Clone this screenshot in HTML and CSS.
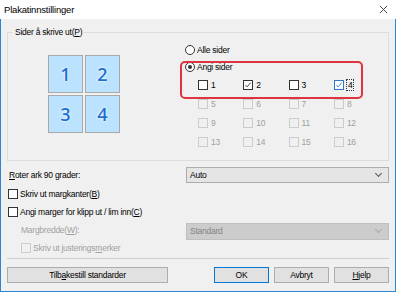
FILE: index.html
```html
<!DOCTYPE html>
<html lang="no">
<head>
    <meta charset="UTF-8">
    <meta name="viewport" content="width=device-width, initial-scale=1.0">
    <title>Plakatinnstillinger</title>
    <link rel="stylesheet" href="styles.css">
</head>
<body>
<div class="window">
    <div class="titlebar">
        <span class="title">Plakatinnstillinger</span>
        <svg class="close" width="10" height="10" viewBox="0 0 10 10">
            <path d="M1 1 L9 9 M9 1 L1 9" stroke="#333" stroke-width="1" fill="none"/>
        </svg>
    </div>

    <div class="dialog">
        <fieldset class="group">
            <legend>Sider å skrive ut(<u>P</u>)</legend>
            <div class="group-body">
                <div class="preview">
                    <div class="tile">1</div>
                    <div class="tile">2</div>
                    <div class="tile">3</div>
                    <div class="tile">4</div>
                </div>

                <div class="pages">
                    <div class="radio-row first"><span class="radio"></span>Alle sider</div>
                    <div class="custom">
                        <div class="radio-row"><span class="radio on"></span>Angi sider</div>
                        <div class="page-grid">
                            <span class="check"><span class="box"></span>1</span>
                            <span class="check"><span class="box"><svg viewBox="0 0 9 9"><path d="M1.5 4.5 L3.5 6.6 L7.6 1.8" stroke="#333" fill="none"/></svg></span>2</span>
                            <span class="check"><span class="box"></span>3</span>
                            <span class="check"><span class="box focus"><svg viewBox="0 0 9 9"><path d="M1.5 4.5 L3.5 6.6 L7.6 1.8" stroke="#2a78d0" fill="none"/></svg></span><span class="focus-text">4</span></span>
                        </div>
                    </div>
                    <div class="page-grid disabled">
                        <span class="check"><span class="box"></span>5</span>
                        <span class="check"><span class="box"></span>6</span>
                        <span class="check"><span class="box"></span>7</span>
                        <span class="check"><span class="box"></span>8</span>
                        <span class="check"><span class="box"></span>9</span>
                        <span class="check"><span class="box"></span>10</span>
                        <span class="check"><span class="box"></span>11</span>
                        <span class="check"><span class="box"></span>12</span>
                        <span class="check"><span class="box"></span>13</span>
                        <span class="check"><span class="box"></span>14</span>
                        <span class="check"><span class="box"></span>15</span>
                        <span class="check"><span class="box"></span>16</span>
                    </div>
                </div>
            </div>
        </fieldset>

        <div class="field-row rotate">
            <span class="field-label"><u>R</u>oter ark 90 grader:</span>
            <div class="combo">Auto<span class="chevron"></span></div>
        </div>

        <div class="option"><span class="box"></span>Skriv ut margkanter(<u>B</u>)</div>
        <div class="option"><span class="box"></span>Angi marger for klipp ut / lim inn(<u>C</u>)</div>

        <div class="field-row margin disabled">
            <span class="field-label">Margbredde(<u>W</u>):</span>
            <div class="combo">Standard<span class="chevron"></span></div>
        </div>

        <div class="option indent disabled"><span class="box"></span>Skriv ut justerings<u>m</u>erker</div>

        <div class="separator"></div>

        <div class="button-group">
            <button class="wide">Tilb<u>a</u>kestill standarder</button>
            <div class="right-buttons">
                <button class="default">OK</button>
                <button>Avbryt</button>
                <button><u>H</u>jelp</button>
            </div>
        </div>
    </div>
</div>
</body>
</html>
```

FILE: styles.css
```css
* {
    box-sizing: border-box;
}
body {
    margin: 0;
    font-family: "Liberation Sans", Arial, sans-serif;
    font-size: 8.5px;
    letter-spacing: -0.25px;
    color: #000;
}
u {
    text-decoration: underline;
    text-underline-offset: 1px;
}
.window {
    width: 396px;
    height: 292px;
    background: #fff;
    display: flex;
    flex-direction: column;
}
.titlebar {
    height: 19px;
    display: flex;
    align-items: center;
    justify-content: space-between;
    padding: 0 8px 0 4px;
    background: #fff;
}
.title {
    font-size: 9.5px;
    letter-spacing: -0.2px;
}
.close {
    width: 9px;
    height: 9px;
}
.dialog {
    flex: 1;
    background: #f0f0f0;
    border: 1px solid #2b87d3;
    border-top: none;
    padding: 7px 6px 7px 6px;
    display: flex;
    flex-direction: column;
}

/* group box */
.group {
    margin: 0;
    padding: 0 0 9px 0;
    border: 1px solid #dcdcdc;
    min-width: 0;
}
.group legend {
    padding: 0 2px;
    margin-left: 5px;
    line-height: 12px;
}
.group-body {
    display: grid;
    grid-template-columns: 172px 1fr;
}
.preview {
    margin: 17px 0 0 40px;
    display: grid;
    grid-template-columns: 35px 35px;
    grid-auto-rows: 38px;
    gap: 2px;
    align-self: start;
}
.tile {
    background: #bbe3ff;
    border: 1px solid #a9a9a9;
    display: flex;
    align-items: center;
    justify-content: center;
    font-family: "Open Sans", "Noto Sans", sans-serif;
    font-weight: 600;
    font-size: 18px;
    letter-spacing: 0;
    color: #1f6fd3;
    text-shadow: 0 0 2px #fff, 0 0 2px #fff;
}
.pages {
    padding: 3px 0 0 5px;
}
.radio-row {
    height: 16px;
    display: flex;
    align-items: center;
}
.radio-row.first {
    height: 18px;
}
.radio {
    width: 10px;
    height: 10px;
    border: 1px solid #333;
    border-radius: 50%;
    background: #fff;
    margin-right: 2px;
    display: flex;
    align-items: center;
    justify-content: center;
}
.radio.on::after {
    content: "";
    width: 4px;
    height: 4px;
    border-radius: 50%;
    background: #333;
}
.custom {
    position: relative;
}
.custom::after {
    content: "";
    position: absolute;
    left: -5px;
    top: 2px;
    width: 179px;
    height: 34px;
    border: 2px solid #df3440;
    border-radius: 5px;
}
.page-grid {
    margin-left: 13px;
    display: grid;
    grid-template-columns: repeat(4, 45.3px);
    grid-auto-rows: 19px;
}
.check {
    display: flex;
    align-items: center;
}
.box {
    width: 10px;
    height: 10px;
    border: 1px solid #333;
    background: #fff;
    margin-right: 3px;
    flex: none;
}
.box svg {
    display: block;
    width: 8px;
    height: 8px;
}
.box.focus {
    border-color: #2a78d0;
}
.focus-text {
    outline: 1px dotted #333;
    padding: 0 1px;
    line-height: 10px;
}
.disabled {
    color: #a0a0a0;
}
.disabled .box {
    border-color: #cccccc;
    background: #f0f0f0;
}

/* rows under the group */
.field-row {
    display: grid;
    grid-template-columns: 179px 1fr;
    align-items: center;
}
.field-row.rotate {
    margin-top: 6px;
    height: 16px;
}
.field-row.margin {
    margin-top: 1px;
    height: 18px;
}
.field-label {
    padding-left: 2px;
}
.margin .field-label {
    padding-left: 14px;
    margin-top: -3px;
}
.combo {
    height: 16px;
    background: #e5e5e5;
    border: 1px solid #adadad;
    padding-left: 3px;
    display: flex;
    align-items: center;
    justify-content: space-between;
}
.margin .combo {
    height: 17px;
    background: #cccccc;
    border-color: #bfbfbf;
    color: #838383;
}
.chevron {
    width: 5px;
    height: 5px;
    border-right: 1px solid #555;
    border-bottom: 1px solid #555;
    transform: rotate(45deg);
    margin: 0 7px 3px 0;
}
.margin .chevron {
    border-color: #a8a8a8;
}
.option {
    height: 18px;
    display: flex;
    align-items: center;
    padding-left: 1px;
}
.rotate + .option {
    margin-top: 2px;
}
.option .box {
    margin-right: 2px;
}
.option.indent {
    height: 16px;
    padding-left: 14px;
}
.separator {
    margin-top: 2px;
    height: 1px;
    background: #cfcfcf;
}
.button-group {
    margin-top: 8px;
    display: flex;
    justify-content: space-between;
}
.right-buttons {
    display: flex;
    gap: 5px;
}
button {
    height: 16px;
    width: 55px;
    padding: 0;
    background: #e1e1e1;
    border: 1px solid #adadad;
    font-family: inherit;
    font-size: 8.5px;
    letter-spacing: -0.25px;
    color: #000;
}
button.wide {
    width: 161px;
}
button.default {
    border-color: #0078d7;
}
```
